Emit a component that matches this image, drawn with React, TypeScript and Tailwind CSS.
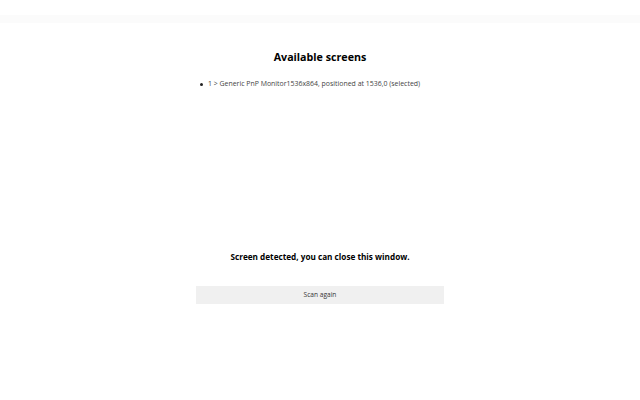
export default function App() {
  return (
    <div
      className="w-[640px] h-[400px] bg-white text-black flex flex-col items-center"
      style={{ fontFamily: '"Open Sans", "Noto Sans", sans-serif' }}
    >
      <div className="w-full h-[8px] mt-[15px] bg-[#fbfbfb]" />
      <h1 className="mt-[26px] text-[10.7px] leading-[16px] font-bold">Available screens</h1>
      <ul className="mt-[13px] pr-[20px] text-[6.95px] leading-[12px] text-[#444]">
        <li className="flex items-center gap-[5px]">
          <span className="w-[3px] h-[3px] rounded-full bg-[#222]" />
          <span>1 &gt; Generic PnP Monitor1536x864, positioned at 1536,0 (selected)</span>
        </li>
      </ul>
      <p className="mt-[161px] text-[8.2px] leading-[12px] font-bold">
        Screen detected, you can close this window.
      </p>
      <button className="mt-[23px] w-[248px] h-[18px] bg-[#f0f0f0] text-[6.6px] text-[#333]">
        Scan again
      </button>
    </div>
  );
}
